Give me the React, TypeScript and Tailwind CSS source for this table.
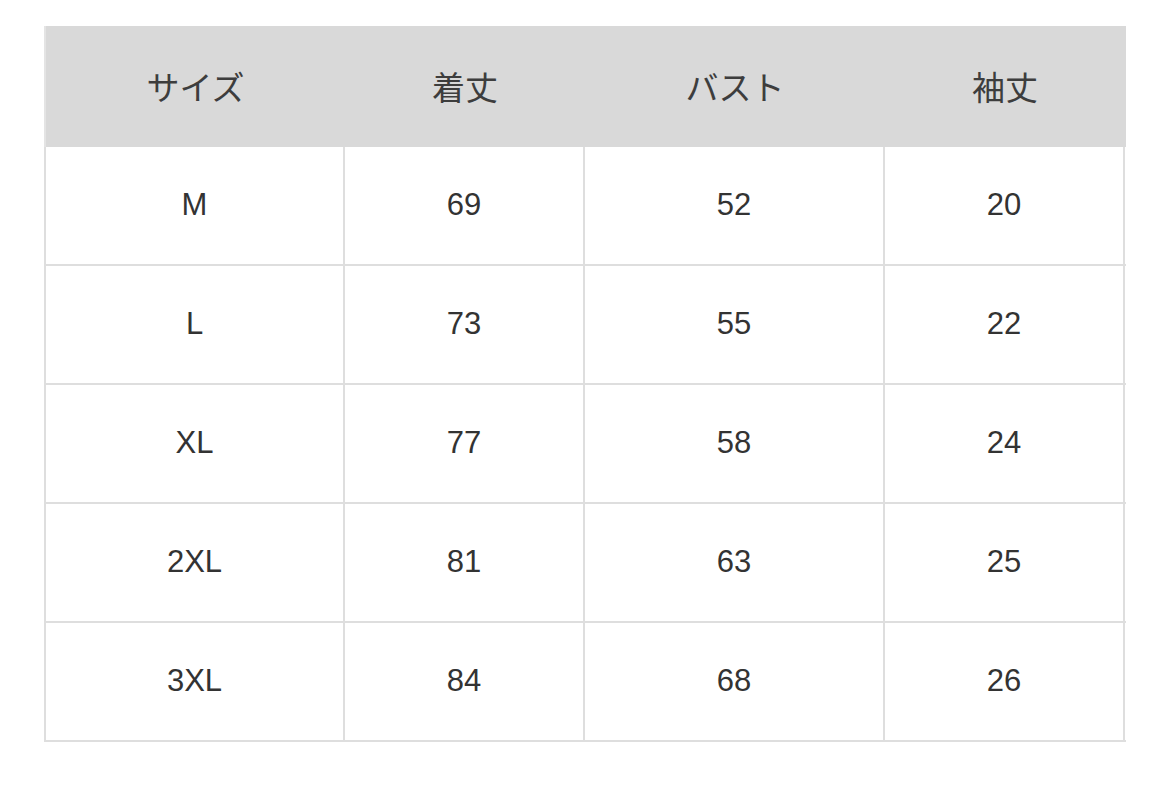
import React from 'react';

const cols = ['サイズ', '着丈', 'バスト', '袖丈'];
const widths = ['w-[299px]', 'w-[240px]', 'w-[300px]', 'w-[240px]'];

const rows = [
  ['M', '69', '52', '20'],
  ['L', '73', '55', '22'],
  ['XL', '77', '58', '24'],
  ['2XL', '81', '63', '25'],
  ['3XL', '84', '68', '26'],
];

export default function App() {
  return (
    <div className="w-[1170px] h-[786px] bg-white pt-[26px] pl-[44px]">
      <div className="w-[1082px]">
        {/* Header */}
        <div className="flex h-[121px] bg-[#d9d9d9] border-l-2 border-[#e4e4e4]">
          {cols.map((c, i) => (
            <div
              key={c}
              className={`${widths[i]} flex items-center justify-center text-[33px] text-[#3d3d3d] font-['Noto_Sans_CJK_JP',sans-serif] font-normal`}
            >
              {c}
            </div>
          ))}
        </div>

        {/* Body */}
        {rows.map((r) => (
          <div key={r[0]} className="flex h-[119px] border-b-2 border-l-2 border-[#dedede]">
            {r.map((v, i) => (
              <div
                key={i}
                className={`${widths[i]} flex items-center justify-center border-r-2 border-[#dedede] text-[31px] text-[#333] font-['Liberation_Sans',sans-serif]`}
              >
                {v}
              </div>
            ))}
          </div>
        ))}
      </div>
    </div>
  );
}
